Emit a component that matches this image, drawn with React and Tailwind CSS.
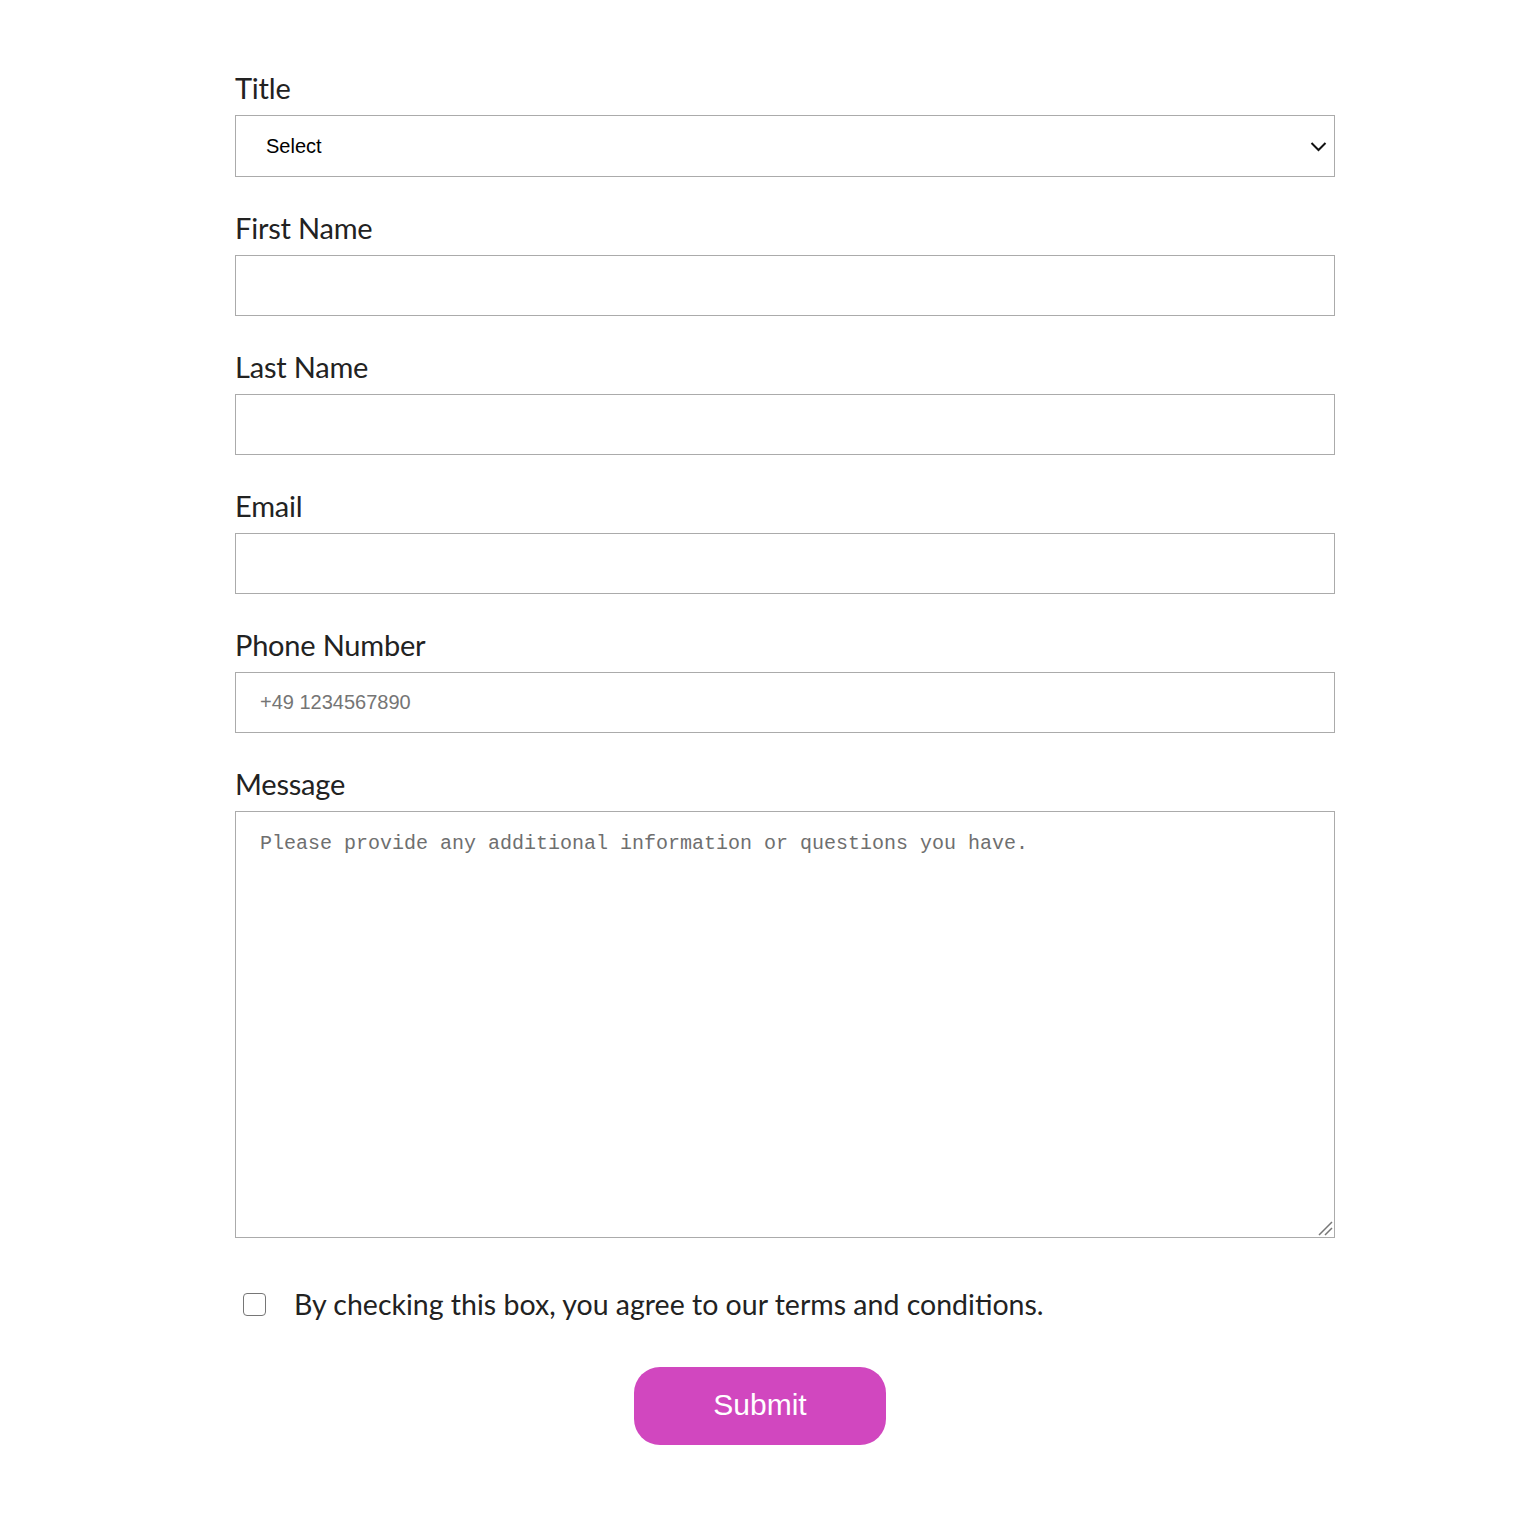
import React from "react";

const labelCls = "block text-[29px] leading-[34px] text-[#222222] mb-[10px] tracking-[-0.2px]";

function Field({ label, children }) {
  return (
    <div className="flex flex-col">
      <label className={labelCls}>{label}</label>
      {children}
    </div>
  );
}

export default function App() {
  return (
    <div className="min-h-[1514px] w-full bg-white font-['Lato',sans-serif]">
      <div className="ml-[235px] w-[1100px] pt-[71px] flex flex-col gap-[34px]">
        <Field label="Title">
          <div className="h-[62px] border border-[#ababab] flex items-center justify-between pl-[30px] pr-[7px] font-['Liberation_Sans',Arial,sans-serif] text-[20px] text-black">
            <span>Select</span>
            <svg width="17" height="11" viewBox="0 0 17 11">
              <path d="M1.5 2 L8.5 9 L15.5 2" fill="none" stroke="#111" strokeWidth="2" />
            </svg>
          </div>
        </Field>
        <Field label="First Name">
          <div className="h-[61px] border border-[#ababab]"></div>
        </Field>
        <Field label="Last Name">
          <div className="h-[61px] border border-[#ababab]"></div>
        </Field>
        <Field label="Email">
          <div className="h-[61px] border border-[#ababab]"></div>
        </Field>
        <Field label="Phone Number">
          <div className="h-[61px] border border-[#ababab] flex items-center pl-[24px] pb-[2px] font-['Liberation_Sans',Arial,sans-serif] text-[20px] text-[#757575]">
            +49 1234567890
          </div>
        </Field>
        <Field label="Message">
          <div className="relative h-[427px] border border-[#ababab] pl-[24px] pt-[20px] font-['Liberation_Mono',monospace] text-[20px] leading-[24px] text-[#6f6f6f]">
            Please provide any additional information or questions you have.
            <svg width="16" height="16" viewBox="0 0 16 16" className="absolute right-[1px] bottom-[1px]">
              <path d="M2 15 L15 2 M8 15 L15 8" stroke="#777" strokeWidth="1.5" fill="none" />
            </svg>
          </div>
        </Field>
      </div>
      <div className="ml-[243px] mt-[48px] flex items-center h-[36px]">
        <div className="w-[23px] h-[23px] border border-[#767676] rounded-[4px] bg-white"></div>
        <span className="ml-[28px] text-[28.5px] leading-[36px] text-[#222222]">
          By checking this box, you agree to our terms and conditions.
        </span>
      </div>
      <div className="ml-[634px] mt-[45px] w-[252px] h-[78px] rounded-[26px] bg-[#d147bf] flex items-center justify-center pb-[3px] font-['Liberation_Sans',Arial,sans-serif] text-[30px] text-white">
        Submit
      </div>
    </div>
  );
}
